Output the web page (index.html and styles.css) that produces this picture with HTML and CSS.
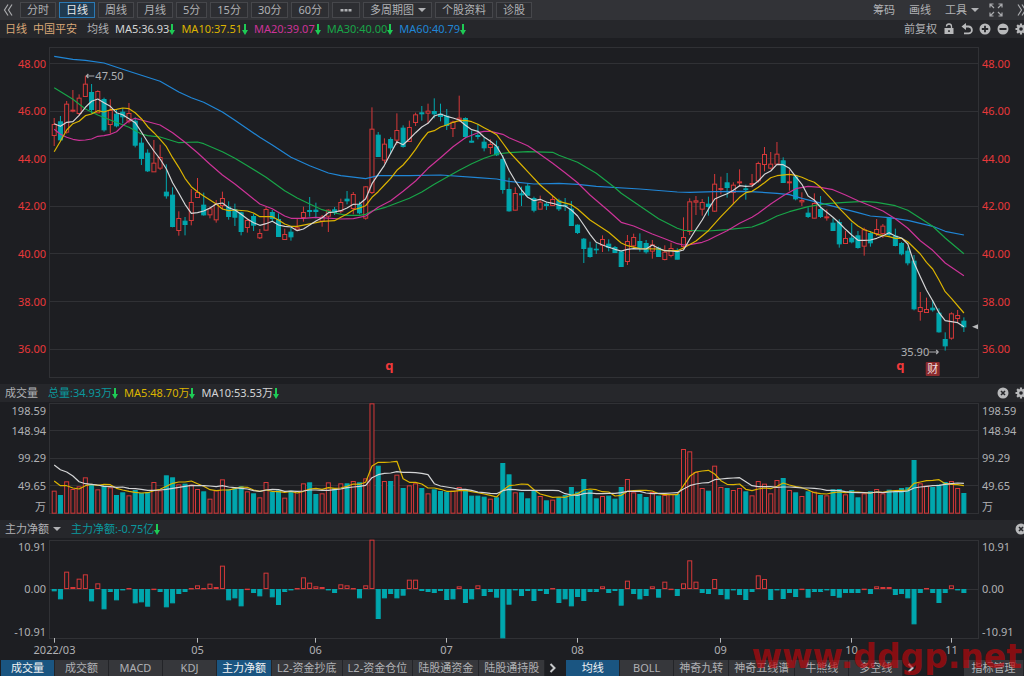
FILE: index.html
```html
<!DOCTYPE html>
<html lang="zh-CN">

<head>
    <meta charset="UTF-8">
    <meta name="viewport" content="width=device-width, initial-scale=1.0">
    <title>中国平安 日线</title>
    <link rel="stylesheet" href="styles.css">
</head>

<body>
    <!-- Shared icons -->
    <svg class="icon-defs" aria-hidden="true">
        <symbol id="down" viewBox="0 0 6 11">
            <path d="M3 0V8" stroke="#1ecb55" stroke-width="2" />
            <path d="M0 6h6L3 11z" fill="#1ecb55" />
        </symbol>
        <symbol id="gear" viewBox="0 0 12 12">
            <g stroke="#b8b9bb" stroke-width="2.2">
                <path d="M6 0.500V11.500M0.500 6H11.500M2.100 2.100L9.900 9.900M9.900 2.100L2.100 9.900" />
            </g>
            <circle cx="6" cy="6" r="4" fill="#b8b9bb" />
            <circle cx="6" cy="6" r="1.800" fill="#26272b" />
        </symbol>
        <symbol id="close" viewBox="0 0 12 12">
            <circle cx="6" cy="6" r="5.500" fill="#b8b9bb" />
            <path d="M4 4l4 4M8 4l-4 4" stroke="#26272b" stroke-width="1.600" />
        </symbol>
    </svg>

    <header class="toolbar">
        <button class="icon-btn" aria-label="向左">
            <svg width="10" height="14" viewBox="0 0 10 14"><path d="M5 1.500L1.500 7L5 12.500M9 1.500L5.500 7L9 12.500" fill="none" stroke="#a9aaad" stroke-width="1.200" /></svg>
        </button>
        <nav class="periods">
            <button class="period">分时</button>
            <button class="period active">日线</button>
            <button class="period">周线</button>
            <button class="period">月线</button>
            <button class="period">5分</button>
            <button class="period">15分</button>
            <button class="period">30分</button>
            <button class="period">60分</button>
            <button class="period more" aria-label="更多">
                <svg width="12" height="10" viewBox="0 0 12 10"><path d="M0.500 4h3v2.500h-3zM4.500 4h3v2.500h-3zM8.500 4h3v2.500h-3z" fill="#b0b1b4" /></svg>
            </button>
            <span class="period dropdown"><select aria-label="多周期图"><option>多周期图</option></select></span>
            <button class="period">个股资料</button>
            <button class="period">诊股</button>
        </nav>
        <div class="tools">
            <button class="text-btn">筹码</button>
            <button class="text-btn">画线</button>
            <span class="dropdown"><select aria-label="工具"><option>工具</option></select></span>
            <button class="icon-btn" aria-label="全屏">
                <svg width="14" height="14" viewBox="0 0 14 14"><path d="M1 4.500V1h3.500M1 1l4 4M9.500 1H13v3.500M13 1L9 5M1 9.500V13h3.500M1 13l4-4M9.500 13H13V9.500M13 13L9 9" fill="none" stroke="#a9aaad" stroke-width="1.200" /></svg>
            </button>
            <button class="icon-btn last" aria-label="向右">
                <svg width="10" height="14" viewBox="0 0 10 14"><path d="M1 1.500L4.500 7L1 12.500M5 1.500L8.500 7L5 12.500" fill="none" stroke="#a9aaad" stroke-width="1.200" /></svg>
            </button>
        </div>
    </header>

    <div class="panel-head">
        <div class="legend">
            <span class="stock">日线</span>
            <span class="stock">中国平安</span>
            <span class="title">均线</span>
            <span class="white">MA5:36.93<svg class="down"><use href="#down" /></svg></span>
            <span class="yellow">MA10:37.51<svg class="down"><use href="#down" /></svg></span>
            <span class="pink">MA20:39.07<svg class="down"><use href="#down" /></svg></span>
            <span class="green">MA30:40.00<svg class="down"><use href="#down" /></svg></span>
            <span class="blue">MA60:40.79<svg class="down"><use href="#down" /></svg></span>
        </div>
        <div class="actions">
            <button class="text-btn">前复权</button>
            <button class="icon-btn" aria-label="锁定">
                <svg width="12" height="12" viewBox="0 0 12 12"><path d="M3.500 3.500a2.500 2.500 0 0 1 5 0V5" fill="none" stroke="#b8b9bb" stroke-width="1.300" /><path d="M1.500 5h9v6h-9z" fill="#b8b9bb" /><path d="M5.200 7.200h1.600v1.800H5.200z" fill="#26272b" /></svg>
            </button>
            <button class="icon-btn" aria-label="撤销">
                <svg width="12" height="12" viewBox="0 0 12 12"><path d="M2 3.500h5.500a3.400 3.400 0 0 1 0 6.800H3" fill="none" stroke="#b8b9bb" stroke-width="1.800" /><path d="M5 0v7L0.500 3.500z" fill="#b8b9bb" /></svg>
            </button>
            <button class="icon-btn" aria-label="放大">
                <svg width="12" height="12" viewBox="0 0 12 12"><circle cx="6" cy="6" r="5.500" fill="#b8b9bb" /><path d="M6 2.800v6.400M2.800 6h6.400" stroke="#26272b" stroke-width="1.800" /></svg>
            </button>
            <button class="icon-btn" aria-label="缩小">
                <svg width="12" height="12" viewBox="0 0 12 12"><circle cx="6" cy="6" r="5.500" fill="#b8b9bb" /><path d="M2.500 6h7" stroke="#26272b" stroke-width="2" /></svg>
            </button>
            <button class="icon-btn" aria-label="设置"><svg width="12" height="12"><use href="#gear" /></svg></button>
        </div>
    </div>
    <section class="chart price"><svg id="price-chart"></svg></section>

    <div class="panel-head">
        <div class="legend">
            <span class="title">成交量</span>
            <span class="teal">总量:34.93万<svg class="down"><use href="#down" /></svg></span>
            <span class="yellow">MA5:48.70万<svg class="down"><use href="#down" /></svg></span>
            <span class="white">MA10:53.53万<svg class="down"><use href="#down" /></svg></span>
        </div>
        <div class="actions">
            <button class="icon-btn" aria-label="关闭"><svg width="12" height="12"><use href="#close" /></svg></button>
            <button class="icon-btn" aria-label="设置"><svg width="12" height="12"><use href="#gear" /></svg></button>
        </div>
    </div>
    <section class="chart volume"><svg id="volume-chart"></svg></section>

    <div class="panel-head">
        <div class="legend">
            <span class="dropdown title"><select aria-label="指标"><option>主力净额</option></select></span>
            <span class="teal">主力净额:-0.75亿<svg class="down"><use href="#down" /></svg></span>
        </div>
        <div class="actions">
            <button class="icon-btn" aria-label="关闭"><svg width="12" height="12"><use href="#close" /></svg></button>
        </div>
    </div>
    <section class="chart flow"><svg id="flow-chart"></svg></section>

    <footer class="tabs">
        <button class="tab active">成交量</button>
        <button class="tab">成交额</button>
        <button class="tab">MACD</button>
        <button class="tab">KDJ</button>
        <button class="tab active">主力净额</button>
        <button class="tab">L2-资金抄底</button>
        <button class="tab">L2-资金仓位</button>
        <button class="tab">陆股通资金</button>
        <button class="tab">陆股通持股</button>
        <button class="next" aria-label="更多指标"><svg width="8" height="10" viewBox="0 0 8 10"><path d="M1.500 1l4 4l-4 4" fill="none" stroke="#c8c9cb" stroke-width="2" /></svg></button>
        <button class="tab active">均线</button>
        <button class="tab">BOLL</button>
        <button class="tab">神奇九转</button>
        <button class="tab">神奇五线谱</button>
        <button class="tab">牛熊线</button>
        <button class="tab">多空线</button>
        <button class="next" aria-label="更多均线"><svg width="8" height="10" viewBox="0 0 8 10"><path d="M1.500 1l4 4l-4 4" fill="none" stroke="#c8c9cb" stroke-width="2" /></svg></button>
        <button class="tab manage">指标管理</button>
    </footer>
    <div class="watermark">www.ddgp.net</div>

    <script src="script.js"></script>
</body>

</html>
```
FILE: styles.css
```css
* {
    box-sizing: border-box;
}

body {
    margin: 0;
    height: 100vh;
    display: flex;
    flex-direction: column;
    overflow: hidden;
    position: relative;
    background-color: #1d1e22;
    color: #b0b1b4;
    font-family: "Noto Sans", "Noto Sans CJK SC", sans-serif;
    font-size: 11px;
    line-height: 16px;
}

button,
select {
    margin: 0;
    padding: 0;
    border: none;
    background: none;
    color: inherit;
    font: inherit;
    white-space: nowrap;
    cursor: pointer;
}

select {
    appearance: none;
    height: 14px;
    line-height: 14px;
}

.icon-defs {
    display: none;
}

.icon-btn {
    display: flex;
    align-items: center;
}

/* Toolbar */
.toolbar {
    flex: none;
    height: 20px;
    display: flex;
    align-items: center;
    padding-left: 3px;
    background-color: #323337;
}

.periods {
    display: flex;
    gap: 3px;
    margin-left: 7px;
}

.period {
    display: flex;
    align-items: center;
    height: 16px;
    padding: 0 6px;
    border: 1px solid #46474b;
    background-color: #2d2e32;
    line-height: 14px;
}

.period.active {
    border-color: #2a79b4;
    background-color: #1f3a50;
    color: #e6e7e8;
}

.period.more {
    padding: 0 7px;
}

.dropdown {
    display: flex;
    align-items: center;
    gap: 4px;
}

.period.dropdown {
    padding-right: 5px;
}

.dropdown::after {
    content: "";
    border: 4px solid transparent;
    border-top-color: #b0b1b4;
    border-bottom: none;
}

.tools {
    display: flex;
    align-items: center;
    gap: 14px;
    margin-left: auto;
    margin-right: -3px;
}

.tools .dropdown + .icon-btn {
    margin-left: -4px;
}

/* Panel headers */
.panel-head {
    flex: none;
    height: 18px;
    display: flex;
    align-items: center;
    justify-content: space-between;
    padding-left: 5px;
    background-color: #26272b;
}

.legend,
.legend span,
.actions {
    display: flex;
    align-items: center;
}

.legend {
    gap: 6px;
}

.legend .title {
    margin-right: 4px;
}

.legend .stock + .title {
    margin-left: 4px;
    margin-right: 0;
}

.actions {
    gap: 6px;
    margin-right: -3px;
}

.down {
    width: 6px;
    height: 11px;
}

.stock {
    color: #d9a878;
}

.white {
    color: #d4d5d6;
}

.yellow {
    color: #dcb400;
}

.pink {
    color: #cc3398;
}

.green {
    color: #18a548;
}

.blue {
    color: #2086d6;
}

.teal {
    color: #0a989e;
}

/* Charts */
.chart {
    min-height: 0;
}

.chart svg {
    display: block;
    width: 100%;
    height: 100%;
}

.price {
    flex: 346 1 0;
}

.volume {
    flex: 118 1 0;
}

.flow {
    flex: 122 1 0;
}

.grid {
    stroke: #303135;
}

.tick {
    stroke: #b8b9bb;
}

.up {
    fill: #1d1e22;
    stroke: #d63839;
}

.fall {
    fill: #00a7ae;
    stroke: #00a7ae;
}

.line {
    fill: none;
    stroke-width: 1.2;
    stroke-linejoin: round;
}

.label {
    fill: #b0b1b4;
}

.label.red {
    fill: #e8383a;
}

.label.event {
    fill: #f0393b;
    font-size: 13px;
    font-weight: bold;
}

.label.report {
    fill: #f0dede;
}

.report-box {
    fill: #8a2a2d;
}

/* Bottom tabs */
.tabs {
    flex: none;
    height: 16px;
    display: flex;
    padding-left: 1px;
}

.tab {
    min-width: 54px;
    padding: 0 5px;
    border-right: 1px solid #232428;
    background-color: #36373b;
}

.tab.active {
    background-color: #1a5581;
    color: #f0f1f2;
}

.next {
    width: 21px;
    display: flex;
    align-items: center;
    justify-content: center;
    padding-right: 6px;
}

.manage {
    margin-left: auto;
    min-width: 60px;
}

.watermark {
    position: absolute;
    right: 2px;
    bottom: 0;
    color: rgba(190, 6, 10, 0.68);
    font-family: "DejaVu Sans", sans-serif;
    font-size: 33px;
    font-weight: bold;
    line-height: 38px;
    pointer-events: none;
}
```
FILE: script.js
```js
// All levels are thirds of a pixel on the 1024 x 676 base layout.
// Candle: [rising, high, body top, body bottom, low]
const candles = [
    [1,354,373,407,438],[0,348,365,420,424],[1,303,312,397,401],[1,270,330,334,337],[1,283,294,341,347],
    [1,227,252,290,290],[0,252,277,329,341],[1,271,274,339,339],[0,293,298,390,395],[1,298,331,374,401],
    [0,330,342,378,382],[0,325,336,351,370],[1,309,340,364,370],[0,352,363,436,442],[0,413,429,476,495],
    [0,448,459,513,516],[1,420,489,516,516],[1,434,472,505,510],[0,493,576,588,596],[0,562,585,680,682],
    [1,634,655,692,707],[0,651,663,674,706],[1,567,607,662,676],[1,534,577,593,593],[0,578,615,645,647],
    [1,620,626,645,655],[1,600,613,660,668],[1,575,595,617,628],[0,604,621,650,659],[0,611,628,652,678],
    [0,635,638,695,706],[1,655,661,683,698],[0,641,649,676,693],[1,687,700,714,717],[1,620,628,691,691],
    [0,630,637,656,666],[0,640,658,710,710],[1,686,703,719,719],[0,683,696,711,722],[1,656,683,690,690],
    [1,620,637,653,665],[0,591,631,635,650],[0,608,630,635,655],[1,645,651,664,680],[1,628,630,649,696],
    [0,621,629,638,645],[1,596,607,634,640],[0,573,597,603,613],[1,576,583,626,643],[0,605,614,639,643],
    [1,558,560,655,659],[1,322,387,578,582],[0,396,405,470,470],[1,415,432,481,490],[0,412,418,444,462],
    [1,340,391,421,434],[0,376,384,440,443],[1,362,382,425,425],[1,338,344,368,378],[0,318,338,342,362],
    [1,311,333,340,370],[0,295,334,342,355],[0,311,342,350,364],[0,327,348,377,390],[1,362,366,386,411],
    [1,287,354,359,366],[0,352,355,410,415],[0,392,423,427,428],[0,372,406,410,418],[0,412,426,444,454],
    [1,418,433,443,462],[0,422,440,465,468],[0,465,478,569,581],[0,533,568,633,635],[1,562,580,631,631],
    [0,560,581,585,618],[0,550,558,586,586],[0,590,595,631,637],[1,587,606,628,628],[0,605,612,617,630],
    [1,588,598,617,617],[0,596,602,627,633],[0,594,615,619,633],[0,603,627,677,677],[0,673,675,698,702],
    [0,714,717,746,789],[0,725,744,770,773],[0,730,747,750,762],[1,706,718,736,756],[0,718,732,743,754],
    [0,738,742,758,758],[0,750,755,800,800],[1,705,724,785,795],[1,701,712,738,744],[0,700,724,744,755],
    [0,720,730,756,761],[1,720,734,754,776],[0,740,744,770,770],[1,736,756,779,781],[1,728,745,767,772],
    [0,745,755,778,778],[1,652,712,740,748],[1,595,605,695,705],[1,588,602,607,645],[1,597,607,628,647],
    [0,590,612,620,647],[1,522,552,634,636],[1,530,565,569,583],[0,519,548,563,593],[1,547,555,578,612],
    [1,508,545,549,560],[0,554,566,569,599],[1,522,550,554,562],[1,485,490,543,548],[1,441,463,494,514],
    [1,456,492,505,508],[1,426,462,493,493],[0,472,482,548,548],[1,510,545,549,572],[0,527,530,597,601],
    [1,577,601,606,618],[0,622,639,650,654],[1,580,610,655,655],[0,588,628,650,654],[1,628,650,654,662],
    [0,655,669,692,692],[0,658,667,732,743],[1,693,715,731,731],[0,668,714,726,730],[0,693,707,743,746],
    [1,683,689,739,767],[0,693,700,729,740],[1,657,688,701,708],[1,672,678,701,714],[0,652,654,704,708],
    [0,686,708,737,739],[0,726,730,762,766],[0,740,753,789,796],[0,765,783,927,931],[1,876,922,935,962],
    [1,893,928,938,938],[0,900,924,930,935],[0,925,939,996,998],[0,997,1018,1038,1052],[1,937,941,1015,1019],
    [1,930,946,956,966],[0,952,963,981,996]
];

const ma5 = [
    371,379,367,365,346,322,304,297,308,319,338,344,356,368,396,426,453,477,507,548,580,613,640,638,633,
    624,612,609,623,630,643,657,668,676,671,664,675,679,681,692,687,675,663,653,638,636,632,624,613,612,
    596,551,523,496,460,425,434,417,398,381,370,348,342,349,354,360,376,389,394,411,424,439,470,511,543,
    570,592,602,598,606,610,616,618,630,648,675,703,727,735,742,748,753,748,746,747,747,735,745,752,753,
    755,750,718,688,660,628,597,589,581,571,557,559,558,543,523,513,493,494,505,530,553,588,600,622,637,
    652,669,688,705,721,721,720,715,707,698,708,714,732,788,830,870,902,938,962,965,968,980
].map((v, i) => [i, v]);

// Slower averages only keep their turning points: [day, level]
const ma10 = [
    [0,455],[1,424],[2,390],[3,371],[4,364],[5,347],[6,342],[7,332],[8,336],[9,329],[10,328],[11,324],
    [12,326],[13,338],[14,356],[15,380],[16,398],[17,418],[18,440],[19,473],[20,502],[21,535],[22,560],
    [23,575],[24,588],[25,600],[26,612],[27,627],[28,632],[29,630],[31,633],[32,639],[33,650],[35,650],
    [36,660],[37,672],[38,679],[39,679],[42,668],[43,664],[45,662],[46,652],[47,642],[48,630],[49,624],
    [50,617],[51,592],[52,575],[53,555],[54,535],[55,511],[56,495],[57,473],[58,448],[59,420],[60,397],
    [61,392],[62,381],[63,375],[64,367],[65,362],[66,361],[67,365],[68,373],[69,383],[70,393],[71,404],
    [72,429],[73,455],[75,495],[76,515],[78,555],[81,604],[83,614],[84,627],[86,660],[89,697],[91,729],
    [92,737],[94,746],[97,747],[98,752],[100,752],[101,744],[103,723],[105,692],[107,650],[110,592],
    [111,578],[112,574],[113,562],[114,548],[115,533],[116,527],[118,523],[119,526],[120,532],[121,540],
    [122,547],[123,562],[125,602],[126,625],[127,644],[128,663],[129,678],[130,689],[131,695],[132,703],
    [134,710],[135,715],[136,715],[137,725],[139,762],[140,787],[141,807],[142,840],[143,875],[144,895],[146,939]
];
const ma20 = [
    [0,388],[1,403],[2,412],[3,418],[4,421],[5,420],[6,417],[7,409],[8,407],[9,403],[10,395],[11,377],
    [12,362],[13,355],[14,360],[17,375],[19,398],[21,427],[23,458],[25,493],[27,525],[29,552],[31,582],
    [33,612],[35,626],[37,648],[38,655],[40,655],[42,652],[46,657],[48,656],[50,648],[52,622],[54,602],
    [56,574],[58,543],[60,505],[62,473],[64,440],[66,413],[68,398],[69,394],[70,394],[72,403],[73,413],
    [75,429],[76,437],[77,450],[80,490],[82,518],[84,548],[86,585],[89,633],[91,667],[93,678],[96,702],
    [98,716],[100,731],[101,735],[102,734],[104,727],[105,720],[106,710],[108,692],[110,670],[112,652],
    [113,640],[115,612],[117,587],[119,566],[121,559],[123,562],[125,569],[127,585],[129,602],[131,617],
    [133,633],[135,656],[137,685],[139,722],[141,751],[143,789],[146,827]
];
const ma30 = [
    [0,263],[3,298],[5,327],[7,345],[9,360],[12,382],[14,402],[15,407],[17,411],[20,428],[23,426],[24,431],
    [27,455],[29,475],[31,497],[34,532],[37,572],[39,594],[41,612],[43,629],[45,639],[47,646],[49,646],
    [50,643],[51,633],[53,623],[55,609],[57,595],[59,576],[61,553],[63,532],[65,511],[67,491],[69,475],
    [71,462],[73,458],[76,455],[80,457],[81,466],[84,487],[87,520],[90,563],[91,580],[94,618],[97,656],
    [100,685],[101,691],[105,693],[108,689],[112,681],[114,667],[116,648],[118,635],[121,620],[124,611],
    [127,607],[130,604],[132,607],[135,617],[137,631],[139,655],[141,679],[143,714],[146,761]
];
const ma60 = [
    [0,169],[3,178],[5,181],[8,189],[11,208],[14,226],[17,244],[20,276],[22,293],[24,307],[27,336],
    [29,361],[33,412],[35,435],[38,472],[41,497],[44,519],[46,527],[50,536],[52,527],[57,527],[62,525],
    [68,533],[71,537],[73,544],[77,552],[81,550],[84,553],[87,559],[94,567],[100,576],[102,577],[106,575],
    [111,574],[116,580],[118,584],[120,595],[124,614],[129,638],[131,648],[134,653],[137,661],[141,679],
    [143,694],[146,705]
];

// Volume bar heights and their averages
const volumes = [
    69,56,97,74,82,109,86,73,84,79,56,64,55,71,62,65,95,70,115,109,88,90,87,74,67,45,70,103,73,76,82,67,61,
    49,95,65,70,48,69,68,91,94,59,61,94,76,91,91,98,94,106,331,144,98,98,117,77,85,91,77,61,73,68,66,69,80,
    71,54,54,51,45,49,152,118,64,64,46,71,53,40,42,49,56,80,66,104,71,46,53,54,45,80,104,64,59,50,65,54,56,
    59,59,194,187,125,77,69,144,80,77,71,77,67,55,98,90,61,101,107,71,64,53,67,66,56,55,73,74,58,71,49,61,
    67,74,61,72,66,77,79,161,91,84,80,87,95,98,77,62
];
const volMa5 = [
    98,84,84,77,74,84,88,85,88,87,76,71,67,64,62,63,69,73,82,91,95,95,98,90,82,72,69,71,71,75,80,79,71,67,
    71,67,66,64,67,62,67,74,76,73,78,76,77,82,89,88,94,143,154,154,155,157,105,94,94,89,77,77,73,67,67,69,
    70,66,63,59,55,50,70,84,86,89,88,72,59,54,49,50,49,55,60,71,74,72,66,65,53,55,67,69,70,70,68,60,57,57,
    57,84,112,125,128,130,119,99,88,87,89,73,69,74,77,75,82,92,86,81,78,71,63,60,59,63,65,63,65,65,63,62,
    65,64,68,69,70,71,91,95,99,100,102,90,88,87,84
];
const volMa10 = [
    146,132,125,113,96,90,88,86,82,81,79,80,76,75,73,70,70,71,73,76,79,82,85,84,84,83,81,84,80,78,76,74,69,
    67,71,73,72,67,68,67,68,71,71,70,70,72,74,78,80,82,85,108,117,121,122,126,124,124,123,121,117,90,83,80,
    77,73,73,70,65,63,61,60,69,73,72,70,70,70,70,70,70,69,60,56,55,60,62,60,60,61,61,63,67,67,67,62,60,61,
    61,62,63,74,84,89,92,93,102,104,106,107,108,96,84,81,81,81,79,80,80,79,77,77,76,74,70,70,69,66,64,63,
    63,62,65,63,65,66,66,68,77,80,82,84,85,88,90,92,91
];

// Net capital flow, above or below zero
const flows = [
    -7,-31,52,6,31,44,-37,17,-61,-9,-34,-3,3,-43,-40,-53,1,-9,-55,-43,-15,-9,3,11,3,16,6,70,-34,-28,-52,1,
    -12,-22,49,-25,-48,-9,-3,3,35,19,8,6,-3,-12,14,11,3,-28,11,148,-90,-28,-15,-28,-20,28,28,-6,-9,-12,-6,
    -33,-31,8,-42,-31,11,-21,-9,-26,-148,-47,-3,-21,-6,-36,-6,-15,3,-42,-31,-52,-24,-36,-9,-9,8,-12,-6,-50,
    25,-15,-31,-21,8,-26,22,1,-21,17,86,22,-12,-15,30,-18,-31,-3,-18,-33,-9,41,30,-33,-3,-30,-12,-24,1,-26,
    -9,-9,-3,-21,-26,-12,-12,-12,1,-15,8,6,6,-18,-15,-28,-106,-12,3,-12,-42,-12,11,-3,-12
];

const months = [[0, '2022/03'], [23, '05'], [42, '06'], [63, '07'], [84, '08'], [107, '09'], [128, '10'], [144, '11']];

const LEFT = 50;
const RIGHT = 45;

// Opens a panel: returns its scales and small drawing helpers
function createPanel(id, top, baseHeight) {
    const svg = document.getElementById(id);
    const box = svg.getBoundingClientRect();
    const right = box.width - RIGHT;
    const step = (right - LEFT) / 149.1;
    const x = i => LEFT + 4.2 + i * step;
    const y = level => (level / 3 - top) * box.height / baseHeight;
    svg.innerHTML = '';

    function add(name, attrs, text) {
        const el = document.createElementNS('http://www.w3.org/2000/svg', name);
        for (const key in attrs) {
            el.setAttribute(key, attrs[key]);
        }
        if (text) {
            el.textContent = text;
        }
        svg.appendChild(el);
    }

    function hline(level) {
        const ly = Math.floor(y(level)) + 0.5;
        add('line', { class: 'grid', x1: LEFT - 1, x2: right, y1: ly, y2: ly });
    }

    function frame(from, to) {
        hline(from);
        hline(to);
        add('line', { class: 'grid', x1: LEFT - 0.5, x2: LEFT - 0.5, y1: y(from), y2: y(to) });
        add('line', { class: 'grid', x1: right - 0.5, x2: right - 0.5, y1: y(from), y2: y(to) });
    }

    function axis(level, text, cls) {
        const ty = y(level) + 4;
        add('text', { class: 'label ' + cls, x: LEFT - 4, y: ty, 'text-anchor': 'end' }, text);
        add('text', { class: 'label ' + cls, x: right + 3, y: ty }, text);
    }

    function bar(i, from, to, up) {
        const height = Math.max(y(to) - y(from) - 1, 0.4);
        add('rect', { class: up ? 'up' : 'fall', x: x(i) - 2, y: y(from) + 0.5, width: 4, height: height });
    }

    function line(points, cls) {
        const path = points.map(p => x(p[0]).toFixed(1) + ',' + y(p[1]).toFixed(1)).join(' ');
        add('polyline', { class: 'line ' + cls, points: path, stroke: 'currentColor' });
    }

    return { x, y, right, add, hline, frame, axis, bar, line };
}

function drawPrice() {
    const p = createPanel('price-chart', 38, 346);
    p.frame(142, 1131);
    for (let price = 48; price >= 36; price -= 2) {
        const level = 191 + (48 - price) * 71.35;
        p.hline(level);
        p.axis(level, price.toFixed(2), 'red');
    }
    candles.forEach(([up, high, top, bottom, low], i) => {
        p.add('line', { class: up ? 'up' : 'fall', x1: p.x(i), x2: p.x(i), y1: p.y(high), y2: p.y(low) });
        p.bar(i, top - 1, bottom + 1, up);
    });
    p.line(ma60, 'blue');
    p.line(ma30, 'green');
    p.line(ma20, 'pink');
    p.line(ma10, 'yellow');
    p.line(ma5, 'white');

    // Highest and lowest price
    const hx = p.x(5), hy = p.y(228);
    p.add('path', { class: 'line', stroke: '#a9aaad', d: `M${hx + 9} ${hy}H${hx + 1}m2 -2l-2 2l2 2` });
    p.add('text', { class: 'label', x: hx + 10, y: hy + 4 }, '47.50');
    const lx = p.x(143), ly = p.y(1056);
    p.add('text', { class: 'label', x: lx - 16, y: ly + 4, 'text-anchor': 'end' }, '35.90');
    p.add('path', { class: 'line', stroke: '#a9aaad', d: `M${lx - 16} ${ly}h9m-2 -2l2 2l-2 2` });

    // Events and the last price marker
    const ey = p.y(1110);
    p.add('text', { class: 'label event', x: p.x(53.8), y: ey, 'text-anchor': 'middle' }, 'q');
    p.add('text', { class: 'label event', x: p.x(135.8), y: ey, 'text-anchor': 'middle' }, 'q');
    p.add('rect', { class: 'report-box', x: p.x(141) - 7, y: ey - 8, width: 14, height: 14, rx: 1 });
    p.add('text', { class: 'label report', x: p.x(141), y: ey + 3, 'text-anchor': 'middle' }, '财');
    p.add('path', { fill: '#b8b9bb', d: `M${p.right - 1} ${p.y(980) - 2.500}v5l-6 -2.500z` });
}

function drawVolume() {
    const p = createPanel('volume-chart', 402, 118);
    const base = 1541;
    p.frame(1211, base);
    [1292, 1375, 1457].forEach(p.hline);
    p.axis(1232, '198.59', '');
    p.axis(1292, '148.94', '');
    p.axis(1375, '99.29', '');
    p.axis(1457, '49.65', '');
    p.axis(1520, '万', '');
    volumes.forEach((v, i) => p.bar(i, base - v, base, candles[i][0]));
    p.line(volMa5.map((v, i) => [i, base - v]), 'yellow');
    p.line(volMa10.map((v, i) => [i, base - v]), 'white');
}

function drawFlow() {
    const p = createPanel('flow-chart', 538, 122);
    const zero = 1767;
    p.frame(1620, 1914);
    p.hline(zero);
    p.axis(1641, '10.91', '');
    p.axis(zero, '0.00', '');
    p.axis(1896, '-10.91', '');
    flows.forEach((v, i) => p.bar(i, Math.min(zero, zero - v), Math.max(zero, zero - v), v > 0));
    months.forEach(([i, name]) => {
        const tx = Math.floor(p.x(i)) + 0.5;
        p.add('line', { class: 'tick', x1: tx, x2: tx, y1: p.y(1914), y2: p.y(1928) });
        p.add('text', { class: 'label', x: tx, y: p.y(1962), 'text-anchor': 'middle' }, name);
    });
}

function drawAll() {
    drawPrice();
    drawVolume();
    drawFlow();
}

drawAll();
window.addEventListener('resize', drawAll);
```
